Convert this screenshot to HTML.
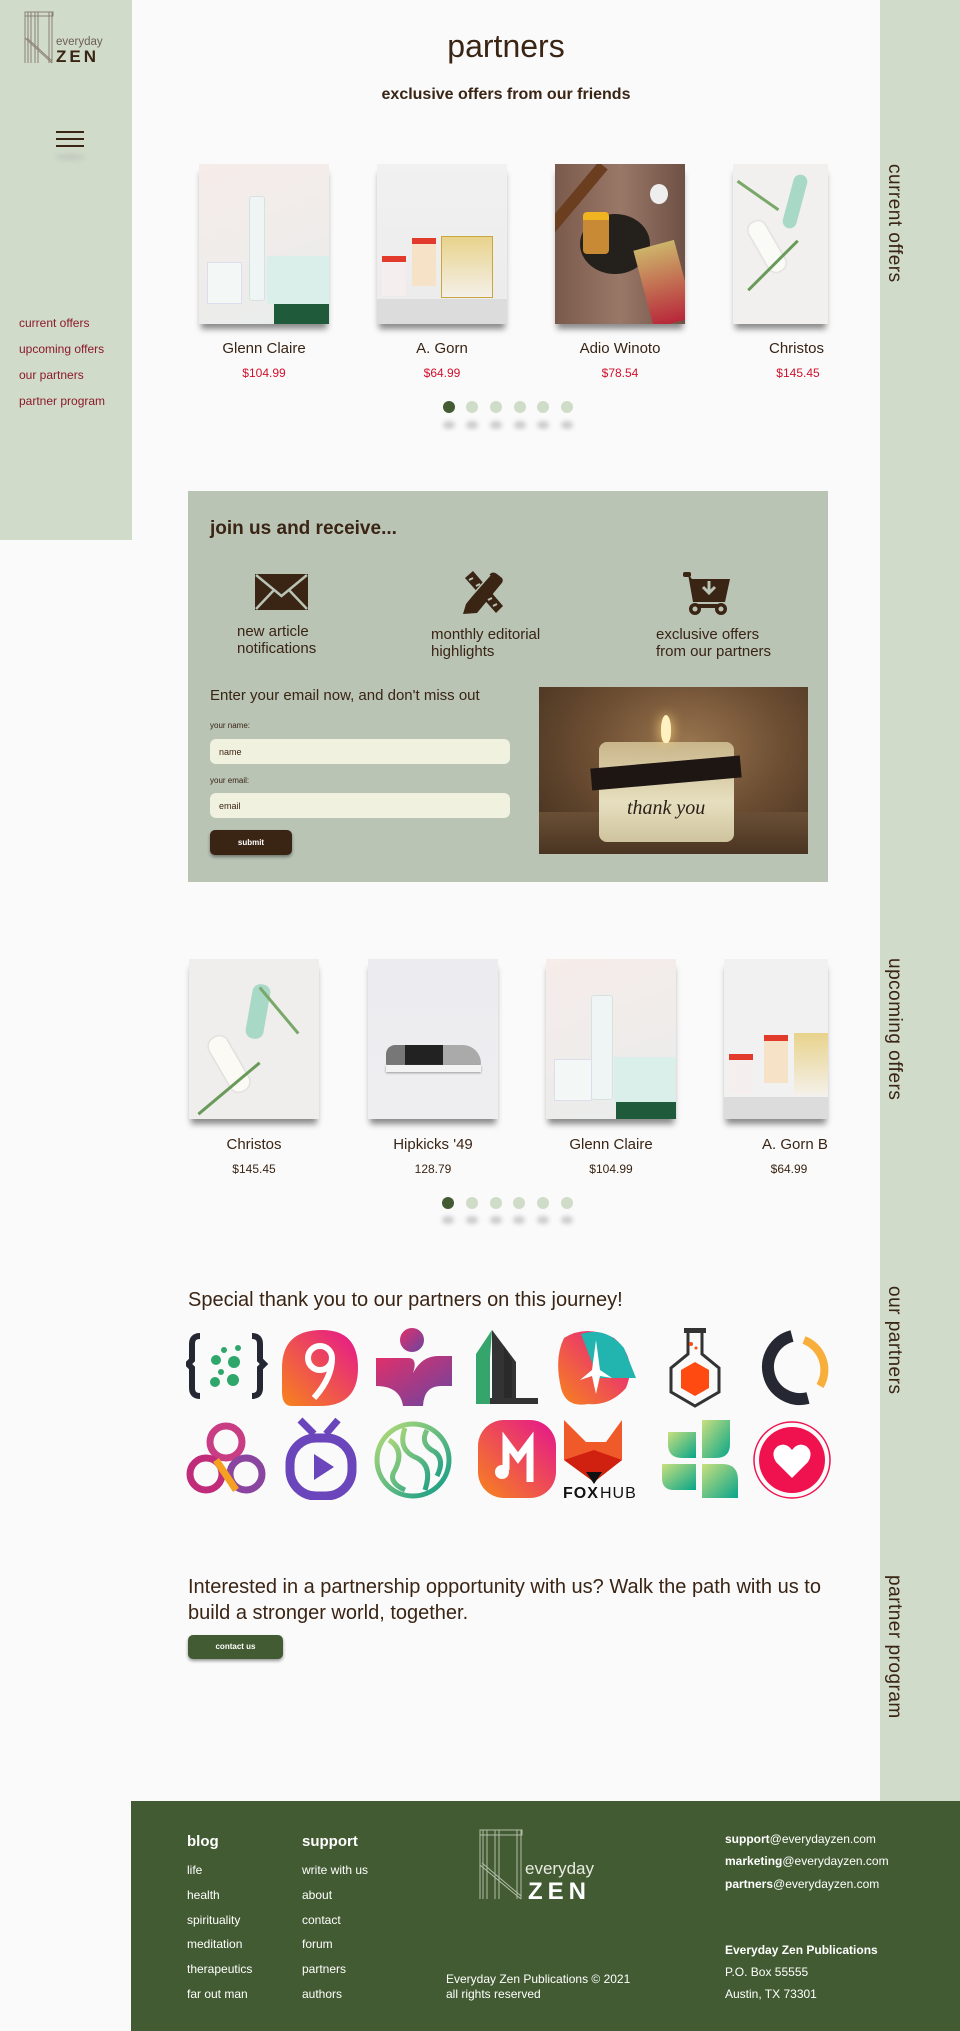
<!DOCTYPE html>
<html><head><meta charset="utf-8">
<style>
*{margin:0;padding:0;box-sizing:border-box}
body{width:960px;height:2031px;background:#fafafa;font-family:"Liberation Sans",sans-serif;color:#3a2414;position:relative;overflow:hidden}
.a{position:absolute}
.side{left:0;top:0;width:132px;height:540px;background:#d0dbc9}
.rs{left:880px;top:0;width:80px;height:1801px;background:#d0dbc9}
.vt{position:absolute;left:880px;width:28px;writing-mode:vertical-rl;font-size:19px;color:#3a2414;letter-spacing:.5px;line-height:28px}
.nav{left:19px;font-size:12px;color:#8b1a2a}
.img{position:absolute;width:130px;height:160px;box-shadow:0 7px 6px -2px rgba(0,0,0,.45);overflow:hidden}
.nm{position:absolute;width:130px;text-align:center;font-size:15px;color:#3a2414}
.pr{position:absolute;width:130px;text-align:center;font-size:12px;color:#d0112b}
.dot{position:absolute;width:12px;height:12px;border-radius:50%;background:#cfdcc8}
.sd{position:absolute;width:12px;height:8px;border-radius:50%;background:#ccc;filter:blur(2px)}
.lbl{font-size:15px;line-height:17px;color:#3a2414}
.in{position:absolute;left:210px;width:300px;height:25px;background:#f1f1e0;border-radius:6px;font-size:9px;padding:8px 9px}
.fl{font-size:12px;color:#fff;position:absolute}
.fb{font-weight:bold}
</style></head><body>
<div class="a side"></div>
<div class="a rs"></div>

<!-- logo -->
<svg class="a" style="left:24px;top:11px" width="92" height="54" viewBox="0 0 92 54">
<g stroke="#7a6a60" stroke-width="1" fill="none" opacity=".8">
<rect x="1" y="1" width="28" height="4"/>
<line x1="1" y1="1" x2="1" y2="52"/><line x1="4" y1="1" x2="4" y2="52"/><line x1="7" y1="1" x2="7" y2="52"/>
<line x1="11" y1="1" x2="11" y2="52"/><line x1="14" y1="1" x2="14" y2="52"/>
<line x1="25" y1="1" x2="25" y2="52"/><line x1="28" y1="1" x2="28" y2="52"/>
<line x1="1" y1="27" x2="28" y2="52"/><line x1="3" y1="27" x2="28" y2="50"/>
</g>
<text x="32" y="34" font-size="11.5" fill="#6e5e55" font-family="Liberation Sans">everyday</text>
<text x="32" y="51" font-size="17" font-weight="bold" fill="#3a2414" letter-spacing="3" font-family="Liberation Sans">ZEN</text>
</svg>
<!-- hamburger -->
<div class="a" style="left:56px;top:131px;width:28px;height:2px;background:#3a2414"></div>
<div class="a" style="left:56px;top:138px;width:28px;height:2px;background:#3a2414"></div>
<div class="a" style="left:56px;top:145px;width:28px;height:2px;background:#3a2414"></div>
<div class="a" style="left:56px;top:154px;width:28px;height:6px;border-radius:50%;background:#c2c9bf;filter:blur(2px)"></div>

<div class="a nav" style="top:316px">current offers</div>
<div class="a nav" style="top:342px">upcoming offers</div>
<div class="a nav" style="top:368px">our partners</div>
<div class="a nav" style="top:394px">partner program</div>

<div class="a" style="left:132px;width:748px;top:28px;text-align:center;font-size:32px;color:#3a2414">partners</div>
<div class="a" style="left:132px;width:748px;top:86px;text-align:center;font-size:16px;font-weight:bold;color:#3a2414">exclusive offers from our friends</div>

<div class="vt" style="top:164px">current offers</div>
<div class="vt" style="top:958px">upcoming offers</div>
<div class="vt" style="top:1286px">our partners</div>
<div class="vt" style="top:1575px">partner program</div>

<!-- carousel 1 -->
<div class="img" style="left:199px;top:164px;background:linear-gradient(160deg,#f6ece9,#e9ecec)">
 <div class="a" style="left:50px;top:32px;width:16px;height:105px;background:#eef5f4;border:1px solid #d5e2e0;border-radius:3px"></div>
 <div class="a" style="left:8px;top:98px;width:35px;height:42px;background:#f3f7f6;border:1px solid #dde"></div>
 <div class="a" style="left:68px;top:92px;width:62px;height:48px;background:#dbefea"></div>
 <div class="a" style="left:75px;top:140px;width:55px;height:20px;background:#1f5b3a"></div>
</div>
<div class="img" style="left:377px;top:164px;background:linear-gradient(#f1f1f1,#ecebeb)">
 <div class="a" style="left:5px;top:92px;width:24px;height:40px;background:#f4eeee;border-top:6px solid #e23b2b"></div>
 <div class="a" style="left:35px;top:74px;width:24px;height:48px;background:#f5e2c7;border-top:6px solid #e23b2b"></div>
 <div class="a" style="left:64px;top:72px;width:52px;height:62px;background:linear-gradient(#e8d38c,#f4f0e8);border:1px solid #c9a640"></div>
 <div class="a" style="left:0;top:135px;width:130px;height:25px;background:#dcdcdc"></div>
</div>
<div class="img" style="left:555px;top:164px;background:linear-gradient(90deg,#7a5a4c,#9a7868,#6e5145)">
 <div class="a" style="left:10px;top:-10px;width:12px;height:100px;background:#6b3e20;transform:rotate(40deg)"></div>
 <div class="a" style="left:25px;top:50px;width:70px;height:60px;border-radius:50%;background:#24201c"></div>
 <div class="a" style="left:28px;top:48px;width:26px;height:42px;background:#c88a35;border-top:8px solid #f0b420;border-radius:4px"></div>
 <div class="a" style="left:88px;top:80px;width:42px;height:80px;background:linear-gradient(#cdb46a,#b8273a);transform:rotate(-15deg)"></div>
 <div class="a" style="left:95px;top:20px;width:18px;height:20px;border-radius:50%;background:#eee"></div>
</div>
<div class="img" style="left:733px;top:164px;width:95px;background:#f1f0ee">
 <div class="a" style="left:55px;top:10px;width:14px;height:55px;background:#a8d8c6;border-radius:7px;transform:rotate(15deg)"></div>
 <div class="a" style="left:25px;top:55px;width:18px;height:55px;background:#fafaf6;border-radius:8px;transform:rotate(-30deg);box-shadow:0 0 2px #bbb"></div>
 <div class="a" style="left:5px;top:100px;width:70px;height:3px;background:#6a9a5a;transform:rotate(-45deg)"></div>
 <div class="a" style="left:0px;top:30px;width:50px;height:3px;background:#7aa86a;transform:rotate(35deg)"></div>
</div>
<div class="nm" style="left:199px;top:340px">Glenn Claire</div>
<div class="nm" style="left:377px;top:340px">A. Gorn</div>
<div class="nm" style="left:555px;top:340px">Adio Winoto</div>
<div class="nm" style="left:733px;top:340px;width:95px;overflow:hidden;text-align:left;padding-left:36px;white-space:nowrap">Christos</div>
<div class="pr" style="left:199px;top:366px">$104.99</div>
<div class="pr" style="left:377px;top:366px">$64.99</div>
<div class="pr" style="left:555px;top:366px">$78.54</div>
<div class="pr" style="left:733px;top:366px">$145.45</div>

<div class="dot" style="left:443px;top:401px;background:#425b32"></div>
<div class="dot" style="left:466px;top:401px"></div><div class="dot" style="left:490px;top:401px"></div>
<div class="dot" style="left:514px;top:401px"></div><div class="dot" style="left:537px;top:401px"></div>
<div class="dot" style="left:561px;top:401px"></div>
<div class="sd" style="left:443px;top:421px"></div><div class="sd" style="left:466px;top:421px"></div><div class="sd" style="left:490px;top:421px"></div><div class="sd" style="left:514px;top:421px"></div><div class="sd" style="left:537px;top:421px"></div><div class="sd" style="left:561px;top:421px"></div>

<!-- join box -->
<div class="a" style="left:188px;top:491px;width:640px;height:391px;background:#b9c4b5"></div>
<div class="a" style="left:210px;top:518px;font-size:19px;font-weight:bold;color:#3a2414">join us and receive...</div>
<svg class="a" style="left:255px;top:574px" width="53" height="36" viewBox="0 0 53 36"><rect width="53" height="36" fill="#3a2414"/><path d="M1 1 L26.5 22 L52 1 M1 35 L19 16 M52 35 L34 16" stroke="#b9c4b5" stroke-width="2.5" fill="none"/></svg>
<svg class="a" style="left:460px;top:570px" width="45" height="45" viewBox="0 0 45 45"><g fill="#3a2414"><path d="M6 34 L30 4 Q33 1 37 4 L42 8 Q44 11 41 14 L17 43 L3 44 Z"/><path d="M5 8 L13 1 L43 36 L36 43 Z"/></g><path d="M9 10 L13 8 M16 16 L20 14 M28 30 L32 28 M33 36 L37 34" stroke="#b9c4b5" stroke-width="2"/><path d="M8 30 L30 5" stroke="#b9c4b5" stroke-width="1.5"/></svg>
<svg class="a" style="left:683px;top:572px" width="48" height="44" viewBox="0 0 48 44"><g fill="#3a2414"><rect x="0" y="0" width="8" height="5" rx="2"/><path d="M5 2 L10 30 L42 30 L47 7 L9 7 Z"/><circle cx="12" cy="37" r="6"/><circle cx="38" cy="37" r="6"/><rect x="10" y="32" width="28" height="4"/></g><circle cx="12" cy="37" r="2.5" fill="#b9c4b5"/><circle cx="38" cy="37" r="2.5" fill="#b9c4b5"/><path d="M26 9 L26 20 M20 15 L26 21 L32 15" stroke="#b9c4b5" stroke-width="3" fill="none"/></svg>
<div class="a lbl" style="left:237px;top:623px">new article<br>notifications</div>
<div class="a lbl" style="left:431px;top:626px">monthly editorial<br>highlights</div>
<div class="a lbl" style="left:656px;top:626px">exclusive offers<br>from our partners</div>
<div class="a" style="left:210px;top:687px;font-size:15px;color:#3a2414">Enter your email now, and don't miss out</div>
<div class="a" style="left:210px;top:721px;font-size:8px">your name:</div>
<div class="in" style="top:739px">name</div>
<div class="a" style="left:210px;top:776px;font-size:8px">your email:</div>
<div class="in" style="top:793px">email</div>
<div class="a" style="left:210px;top:830px;width:82px;height:25px;background:#3a2414;border-radius:5px;color:#fff;font-size:8px;font-weight:bold;text-align:center;line-height:25px;box-shadow:0 2px 3px rgba(0,0,0,.4)">submit</div>
<div class="a" style="left:539px;top:687px;width:269px;height:167px;background:radial-gradient(ellipse at 55% 35%,#9a7650 0%,#6e4f33 45%,#3e2c1d 100%);overflow:hidden">
 <div class="a" style="left:0;top:125px;width:269px;height:42px;background:linear-gradient(#6a4f35,#4a3522)"></div>
 <div class="a" style="left:60px;top:55px;width:135px;height:100px;border-radius:8px;background:linear-gradient(#c9b58a,#e6dfbf 60%,#cfc39e)"></div>
 <div class="a" style="left:52px;top:75px;width:150px;height:22px;background:#1e1613;transform:rotate(-5deg)"></div>
 <div class="a" style="left:122px;top:28px;width:10px;height:28px;border-radius:50% 50% 40% 40%;background:#fff1c0;box-shadow:0 0 12px #ffd57a"></div>
 <div class="a" style="left:88px;top:110px;font-family:'Liberation Serif',serif;font-style:italic;font-size:20px;color:#2a1f18">thank you</div>
</div>

<!-- carousel 2 -->
<div class="img" style="left:189px;top:959px;background:#efeeec">
 <div class="a" style="left:60px;top:25px;width:18px;height:55px;background:#a8d8c6;border-radius:8px;transform:rotate(10deg)"></div>
 <div class="a" style="left:30px;top:75px;width:20px;height:60px;background:#fbfaf4;border-radius:9px;transform:rotate(-30deg);box-shadow:0 0 2px #bbb"></div>
 <div class="a" style="left:0px;top:128px;width:80px;height:3px;background:#6a9a5a;transform:rotate(-40deg)"></div>
 <div class="a" style="left:60px;top:50px;width:60px;height:3px;background:#7aa86a;transform:rotate(50deg)"></div>
</div>
<div class="img" style="left:368px;top:959px;background:linear-gradient(#ececf0,#eeeef1)">
 <div class="a" style="left:18px;top:86px;width:95px;height:22px;background:linear-gradient(90deg,#777 0 20%,#222 20% 60%,#aaa 60%);border-radius:10px 20px 4px 4px"></div>
 <div class="a" style="left:18px;top:106px;width:95px;height:7px;background:#f3f3f3;box-shadow:0 1px 2px #999"></div>
</div>
<div class="img" style="left:546px;top:959px;background:linear-gradient(160deg,#f6ece9,#e9ecec)">
 <div class="a" style="left:45px;top:36px;width:22px;height:105px;background:#eef5f4;border:1px solid #d5e2e0;border-radius:3px"></div>
 <div class="a" style="left:8px;top:100px;width:38px;height:42px;background:#f3f7f6;border:1px solid #dde"></div>
 <div class="a" style="left:68px;top:98px;width:62px;height:46px;background:#dbefea"></div>
 <div class="a" style="left:70px;top:143px;width:60px;height:17px;background:#1f5b3a"></div>
</div>
<div class="img" style="left:724px;top:959px;width:104px;background:#f1f1f1">
 <div class="a" style="left:5px;top:95px;width:24px;height:40px;background:#f4eeee;border-top:6px solid #e23b2b"></div>
 <div class="a" style="left:40px;top:76px;width:24px;height:48px;background:#f5e2c7;border-top:6px solid #e23b2b"></div>
 <div class="a" style="left:70px;top:74px;width:34px;height:62px;background:linear-gradient(#e8d38c,#f4f0e8)"></div>
 <div class="a" style="left:0;top:138px;width:104px;height:22px;background:#dcdcdc"></div>
</div>
<div class="nm" style="left:189px;top:1136px">Christos</div>
<div class="nm" style="left:368px;top:1136px">Hipkicks '49</div>
<div class="nm" style="left:546px;top:1136px">Glenn Claire</div>
<div class="nm" style="left:724px;top:1136px;width:104px;overflow:hidden;white-space:nowrap;text-align:left;padding-left:38px">A. Gorn B</div>
<div class="pr" style="left:189px;top:1162px;color:#3a2414">$145.45</div>
<div class="pr" style="left:368px;top:1162px;color:#3a2414">128.79</div>
<div class="pr" style="left:546px;top:1162px;color:#3a2414">$104.99</div>
<div class="pr" style="left:724px;top:1162px;color:#3a2414">$64.99</div>
<div class="dot" style="left:442px;top:1197px;background:#425b32"></div>
<div class="dot" style="left:466px;top:1197px"></div><div class="dot" style="left:490px;top:1197px"></div>
<div class="dot" style="left:513px;top:1197px"></div><div class="dot" style="left:537px;top:1197px"></div>
<div class="dot" style="left:561px;top:1197px"></div>
<div class="sd" style="left:442px;top:1216px"></div><div class="sd" style="left:466px;top:1216px"></div><div class="sd" style="left:490px;top:1216px"></div><div class="sd" style="left:513px;top:1216px"></div><div class="sd" style="left:537px;top:1216px"></div><div class="sd" style="left:561px;top:1216px"></div>

<!-- partners logos -->
<div class="a" style="left:188px;top:1289px;font-size:20px;color:#3a2414">Special thank you to our partners on this journey!</div>
<svg class="a" style="left:186px;top:1328px" width="660" height="172" viewBox="0 0 660 172">
<defs>
<linearGradient id="g1" x1="0" y1="1" x2="1" y2="0"><stop offset="0" stop-color="#f7841c"/><stop offset="1" stop-color="#e4158f"/></linearGradient>
<linearGradient id="g2" x1="0" y1="0" x2="1" y2="1"><stop offset="0" stop-color="#e22f6a"/><stop offset="1" stop-color="#6a45a0"/></linearGradient>
<linearGradient id="g3" x1="0" y1="0" x2="1" y2="1"><stop offset="0" stop-color="#b7dc78"/><stop offset="1" stop-color="#119a88"/></linearGradient>
<linearGradient id="g4" x1="0" y1="0" x2="1" y2="1"><stop offset="0" stop-color="#c9e07e"/><stop offset="1" stop-color="#08a58a"/></linearGradient>
</defs>
<g transform="translate(2,2)">
<path d="M12 6 Q4 6 4 14 L4 30 L0 34 L4 38 L4 58 Q4 66 12 66" stroke="#252833" stroke-width="6" fill="none"/>
<path d="M64 6 Q72 6 72 14 L72 30 L76 34 L72 38 L72 58 Q72 66 64 66" stroke="#252833" stroke-width="6" fill="none"/>
<g fill="#2fa66a"><circle cx="28" cy="30" r="5"/><circle cx="46" cy="32" r="6"/><circle cx="45" cy="50" r="6"/><circle cx="27" cy="52" r="5"/><circle cx="36" cy="20" r="3"/><circle cx="50" cy="18" r="3"/><circle cx="33" cy="42" r="3"/></g>
</g>
<path d="M96 40 Q96 2 136 2 Q172 2 172 40 Q172 78 134 78 L106 78 Q96 78 96 64 Z" fill="url(#g1)"/>
<g fill="none" stroke="#fff" stroke-width="6"><circle cx="134" cy="30" r="12"/><path d="M146 30 Q146 50 128 70"/></g>
<circle cx="226" cy="12" r="12" fill="url(#g2)"/>
<path d="M190 30 L222 30 Q232 30 227 45 Q236 28 252 28 L266 28 L266 58 L255 58 Q238 58 237 78 L217 78 Q214 58 190 58 Z" fill="url(#g2)"/>
<g><path d="M306 2 L306 70 L296 70 L296 76 L352 76 L352 70 L330 70 L330 34 L318 18 Z" fill="#333"/><path d="M306 2 L290 26 L290 76 L304 76 L304 30 Z" fill="#35a56c"/><path d="M318 18 L318 70 L326 70 L326 34 Z" fill="#2a2a2a"/></g>
<path d="M378 10 Q400 -4 428 10 Q452 30 440 60 Q424 78 402 76 Q380 80 375 60 Q368 30 378 10 Z" fill="url(#g1)"/>
<path d="M395 6 Q420 -2 438 20 L450 50 L412 50 Z" fill="#22b5b0"/>
<path d="M410 12 L414 42 L426 50 L414 48 L410 66 L406 48 L394 52 L406 42 Z" fill="#fff"/>
<g transform="translate(480,0)"><rect x="18" y="0" width="22" height="5" fill="#333"/><path d="M22 5 L22 26 L5 40 L5 64 L29 78 L53 64 L53 40 L36 26 L36 5" stroke="#333" stroke-width="3" fill="none"/><path d="M29 34 L43 42 L43 60 L29 68 L15 60 L15 42 Z" fill="#ff4a12"/><circle cx="25" cy="16" r="2" fill="#ff4a12"/><circle cx="30" cy="20" r="1.5" fill="#ff4a12"/></g>
<g transform="translate(566,2)"><path d="M40 6 A32 32 0 1 0 56 68" stroke="#252833" stroke-width="12" fill="none"/><path d="M52 10 A32 32 0 0 1 68 56" stroke="#f8ae3a" stroke-width="8" fill="none"/></g>
<g transform="translate(0,92)" fill="none" stroke-width="7"><circle cx="40" cy="22" r="16" stroke="#c93d85"/><circle cx="20" cy="54" r="16" stroke="#c02c7a"/><circle cx="60" cy="54" r="16" stroke="#8a45a0"/><path d="M30 40 L50 70" stroke="#f5a020"/></g>
<g transform="translate(100,92)"><path d="M14 0 L28 14 M52 0 L40 14" stroke="#6a45bb" stroke-width="7"/><rect x="4" y="18" width="62" height="58" rx="26" fill="none" stroke="#6a45bb" stroke-width="9"/><path d="M28 34 L48 47 L28 60 Z" fill="#6a45bb"/></g>
<g transform="translate(189,92)"><circle cx="38" cy="40" r="36" fill="none" stroke="url(#g3)" stroke-width="5"/><path d="M14 20 Q30 30 20 50 Q12 62 30 70 M30 8 Q22 30 42 38 Q58 46 50 70 M52 10 Q44 24 60 32 Q70 40 62 56" stroke="url(#g3)" stroke-width="5" fill="none"/></g>
<g transform="translate(290,92)"><rect x="2" y="0" width="78" height="78" rx="26" fill="url(#g1)"/><path d="M30 50 L30 22 L42 38 L54 22 L54 62" stroke="#fff" stroke-width="7" fill="none"/><circle cx="26" cy="52" r="7" fill="#fff"/></g>
<g transform="translate(378,92)"><path d="M0 0 L22 22 L42 22 L58 0 L58 40 L30 62 L0 40 Z" fill="#f05a28"/><path d="M0 40 L30 62 L58 40 L30 30 Z" fill="#d02010"/><path d="M22 52 L30 64 L38 52 Z" fill="#111"/><text x="-1" y="78" font-size="16" font-weight="bold" fill="#111" font-family="Liberation Sans" letter-spacing="1">FOX</text><text x="36" y="78" font-size="16" fill="#111" font-family="Liberation Sans" letter-spacing="1">HUB</text></g>
<g transform="translate(476,92)"><path d="M6 12 L34 12 L34 38 L20 38 Q6 38 6 24 Z" fill="url(#g4)"/><path d="M40 0 L68 0 L68 24 Q68 38 54 38 L40 38 Z" fill="url(#g4)"/><path d="M0 44 L34 44 L34 70 L12 70 Q0 70 0 58 Z" fill="url(#g4)"/><path d="M40 44 L60 44 Q76 44 76 60 L76 78 L40 78 Z" fill="url(#g4)"/></g>
<g transform="translate(566,92)"><circle cx="40" cy="40" r="38" fill="none" stroke="#f0124e" stroke-width="1.5"/><circle cx="40" cy="40" r="33" fill="#f0124e"/><path d="M40 58 L24 42 Q18 32 26 26 Q34 22 40 30 Q46 22 54 26 Q62 32 56 42 Z" fill="#fff"/></g>
</svg>

<div class="a" style="left:188px;top:1574px;font-size:20px;line-height:26px;color:#3a2414;width:650px">Interested in a partnership opportunity with us? Walk the path with us to build a stronger world, together.</div>
<div class="a" style="left:188px;top:1635px;width:95px;height:24px;background:#425b32;border-radius:5px;color:#fff;font-size:8px;font-weight:bold;text-align:center;line-height:24px;box-shadow:0 2px 3px rgba(0,0,0,.4)">contact us</div>

<!-- footer -->
<div class="a" style="left:131px;top:1801px;width:829px;height:230px;background:#425b32"></div>
<div class="fl fb" style="left:187px;top:1833px;font-size:15px">blog</div>
<div class="fl fb" style="left:302px;top:1833px;font-size:15px">support</div>
<div class="fl" style="left:187px;top:1863px">life</div>
<div class="fl" style="left:187px;top:1888px">health</div>
<div class="fl" style="left:187px;top:1913px">spirituality</div>
<div class="fl" style="left:187px;top:1937px">meditation</div>
<div class="fl" style="left:187px;top:1962px">therapeutics</div>
<div class="fl" style="left:187px;top:1987px">far out man</div>
<div class="fl" style="left:302px;top:1863px">write with us</div>
<div class="fl" style="left:302px;top:1888px">about</div>
<div class="fl" style="left:302px;top:1913px">contact</div>
<div class="fl" style="left:302px;top:1937px">forum</div>
<div class="fl" style="left:302px;top:1962px">partners</div>
<div class="fl" style="left:302px;top:1987px">authors</div>
<svg class="a" style="left:479px;top:1829px" width="132" height="72" viewBox="0 0 132 72">
<g stroke="#cfd6c6" stroke-width="1" fill="none" opacity=".8">
<rect x="1" y="1" width="42" height="5"/>
<line x1="1" y1="1" x2="1" y2="70"/><line x1="4" y1="1" x2="4" y2="70"/><line x1="8" y1="1" x2="8" y2="70"/>
<line x1="16" y1="1" x2="16" y2="70"/><line x1="20" y1="1" x2="20" y2="70"/>
<line x1="38" y1="1" x2="38" y2="70"/><line x1="42" y1="1" x2="42" y2="70"/>
<line x1="1" y1="36" x2="42" y2="70"/><line x1="3" y1="34" x2="42" y2="67"/>
</g>
<text x="46" y="45" font-size="17" fill="#e8ece2" font-family="Liberation Sans">everyday</text>
<text x="49" y="70" font-size="24" font-weight="bold" fill="#fff" letter-spacing="5" font-family="Liberation Sans">ZEN</text>
</svg>
<div class="fl" style="left:446px;top:1972px;line-height:15px">Everyday Zen Publications © 2021<br>all rights reserved</div>
<div class="fl" style="left:725px;top:1832px"><b>support</b>@everydayzen.com</div>
<div class="fl" style="left:725px;top:1854px"><b>marketing</b>@everydayzen.com</div>
<div class="fl" style="left:725px;top:1877px"><b>partners</b>@everydayzen.com</div>
<div class="fl fb" style="left:725px;top:1943px">Everyday Zen Publications</div>
<div class="fl" style="left:725px;top:1965px">P.O. Box 55555</div>
<div class="fl" style="left:725px;top:1987px">Austin, TX 73301</div>
</body></html>
